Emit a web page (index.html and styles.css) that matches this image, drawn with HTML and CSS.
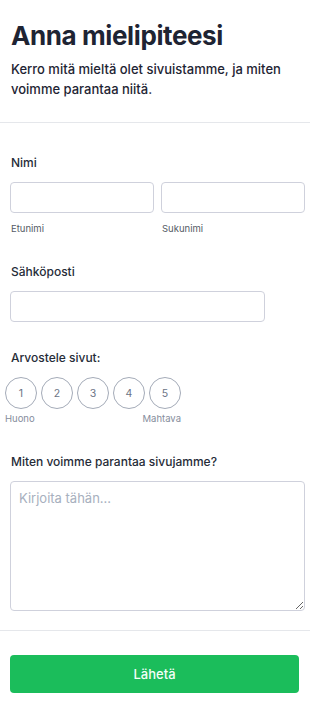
FILE: index.html
```html
<!DOCTYPE html>
<html lang="fi">
<head>
    <meta charset="UTF-8">
    <meta name="viewport" content="width=device-width, initial-scale=1.0">
    <title>Anna mielipiteesi</title>
    <link rel="stylesheet" href="styles.css">
</head>
<body>
    <header class="intro">
        <h1>Anna mielipiteesi</h1>
        <p>Kerro mitä mieltä olet sivuistamme, ja miten voimme parantaa niitä.</p>
    </header>

    <form class="feedback">
        <div class="field first">
            <label class="label">Nimi</label>
            <div class="name-row">
                <div class="name-col">
                    <input type="text" class="input">
                    <span class="hint">Etunimi</span>
                </div>
                <div class="name-col">
                    <input type="text" class="input">
                    <span class="hint">Sukunimi</span>
                </div>
            </div>
        </div>

        <div class="field">
            <label class="label">Sähköposti</label>
            <input type="email" class="input email">
        </div>

        <div class="field">
            <label class="label">Arvostele sivut:</label>
            <div class="rating">
                <div class="circles">
                    <span class="circle">1</span>
                    <span class="circle">2</span>
                    <span class="circle">3</span>
                    <span class="circle">4</span>
                    <span class="circle">5</span>
                </div>
                <div class="scale">
                    <span>Huono</span>
                    <span>Mahtava</span>
                </div>
            </div>
        </div>

        <div class="field">
            <label class="label">Miten voimme parantaa sivujamme?</label>
            <textarea class="textarea" placeholder="Kirjoita tähän..."></textarea>
        </div>

        <div class="actions">
            <button type="button" class="submit">Lähetä</button>
        </div>
    </form>
</body>
</html>
```

FILE: styles.css
```css
body {
    margin: 0;
    font-family: Inter, "Noto Sans", sans-serif;
    color: #1f2937;
    background: #fff;
}
.intro {
    padding: 20px 10px 23px 11px;
    border-bottom: 1px solid #e5e7eb;
}
.intro h1 {
    margin: 0;
    font-size: 26px;
    line-height: 32px;
    font-weight: 700;
    color: #1e2433;
    letter-spacing: -0.4px;
}
.intro p {
    margin: 7px 0 0;
    font-size: 13px;
    line-height: 20px;
    font-weight: 500;
    color: #1e2433;
}
.feedback {
    padding: 0 10px;
}
.field {
    margin-top: 26px;
}
.field.first {
    margin-top: 30px;
}
.label {
    display: block;
    font-size: 12px;
    line-height: 20px;
    font-weight: 500;
    color: #262c38;
    margin-bottom: 9px;
    padding-left: 1px;
}
.name-row {
    display: flex;
    gap: 7px;
}
.name-col {
    display: flex;
    flex-direction: column;
    width: 144px;
    flex-shrink: 0;
}
.input {
    box-sizing: border-box;
    height: 31px;
    width: 100%;
    border: 1px solid #cfd1dc;
    border-radius: 4px;
    background: #fff;
    font-family: inherit;
}
.input.email {
    width: 255px;
}
.hint {
    margin-top: 9px;
    padding-left: 1px;
    font-size: 9.5px;
    line-height: 14px;
    color: #545b66;
}
.rating {
    margin-left: -5px;
    width: 176px;
}
.circles {
    display: flex;
    gap: 4px;
}
.circle {
    box-sizing: border-box;
    width: 32px;
    height: 32px;
    border: 1px solid #a4abb8;
    border-radius: 50%;
    display: flex;
    align-items: center;
    justify-content: center;
    font-size: 10.5px;
    color: #6b7385;
}
.scale {
    display: flex;
    justify-content: space-between;
    margin-top: 3px;
    font-size: 9.5px;
    line-height: 14px;
    color: #858d9c;
}
.textarea {
    display: block;
    box-sizing: border-box;
    width: 295px;
    height: 130px;
    margin-top: 0;
    padding: 8px 8px;
    border: 1px solid #cfd1dc;
    border-radius: 4px;
    font-family: inherit;
    font-size: 13px;
    color: #1f2937;
    resize: vertical;
}
.textarea::placeholder {
    color: #a7b0be;
}
.actions {
    margin: 19px -10px 0;
    padding: 24px 10px 16px;
    border-top: 1px solid #e5e7eb;
}
.submit {
    display: block;
    width: 289px;
    height: 38px;
    border: none;
    border-radius: 4px;
    background: #1bbd5b;
    color: #f4fff8;
    font-family: inherit;
    font-size: 13px;
    font-weight: 500;
}
```
